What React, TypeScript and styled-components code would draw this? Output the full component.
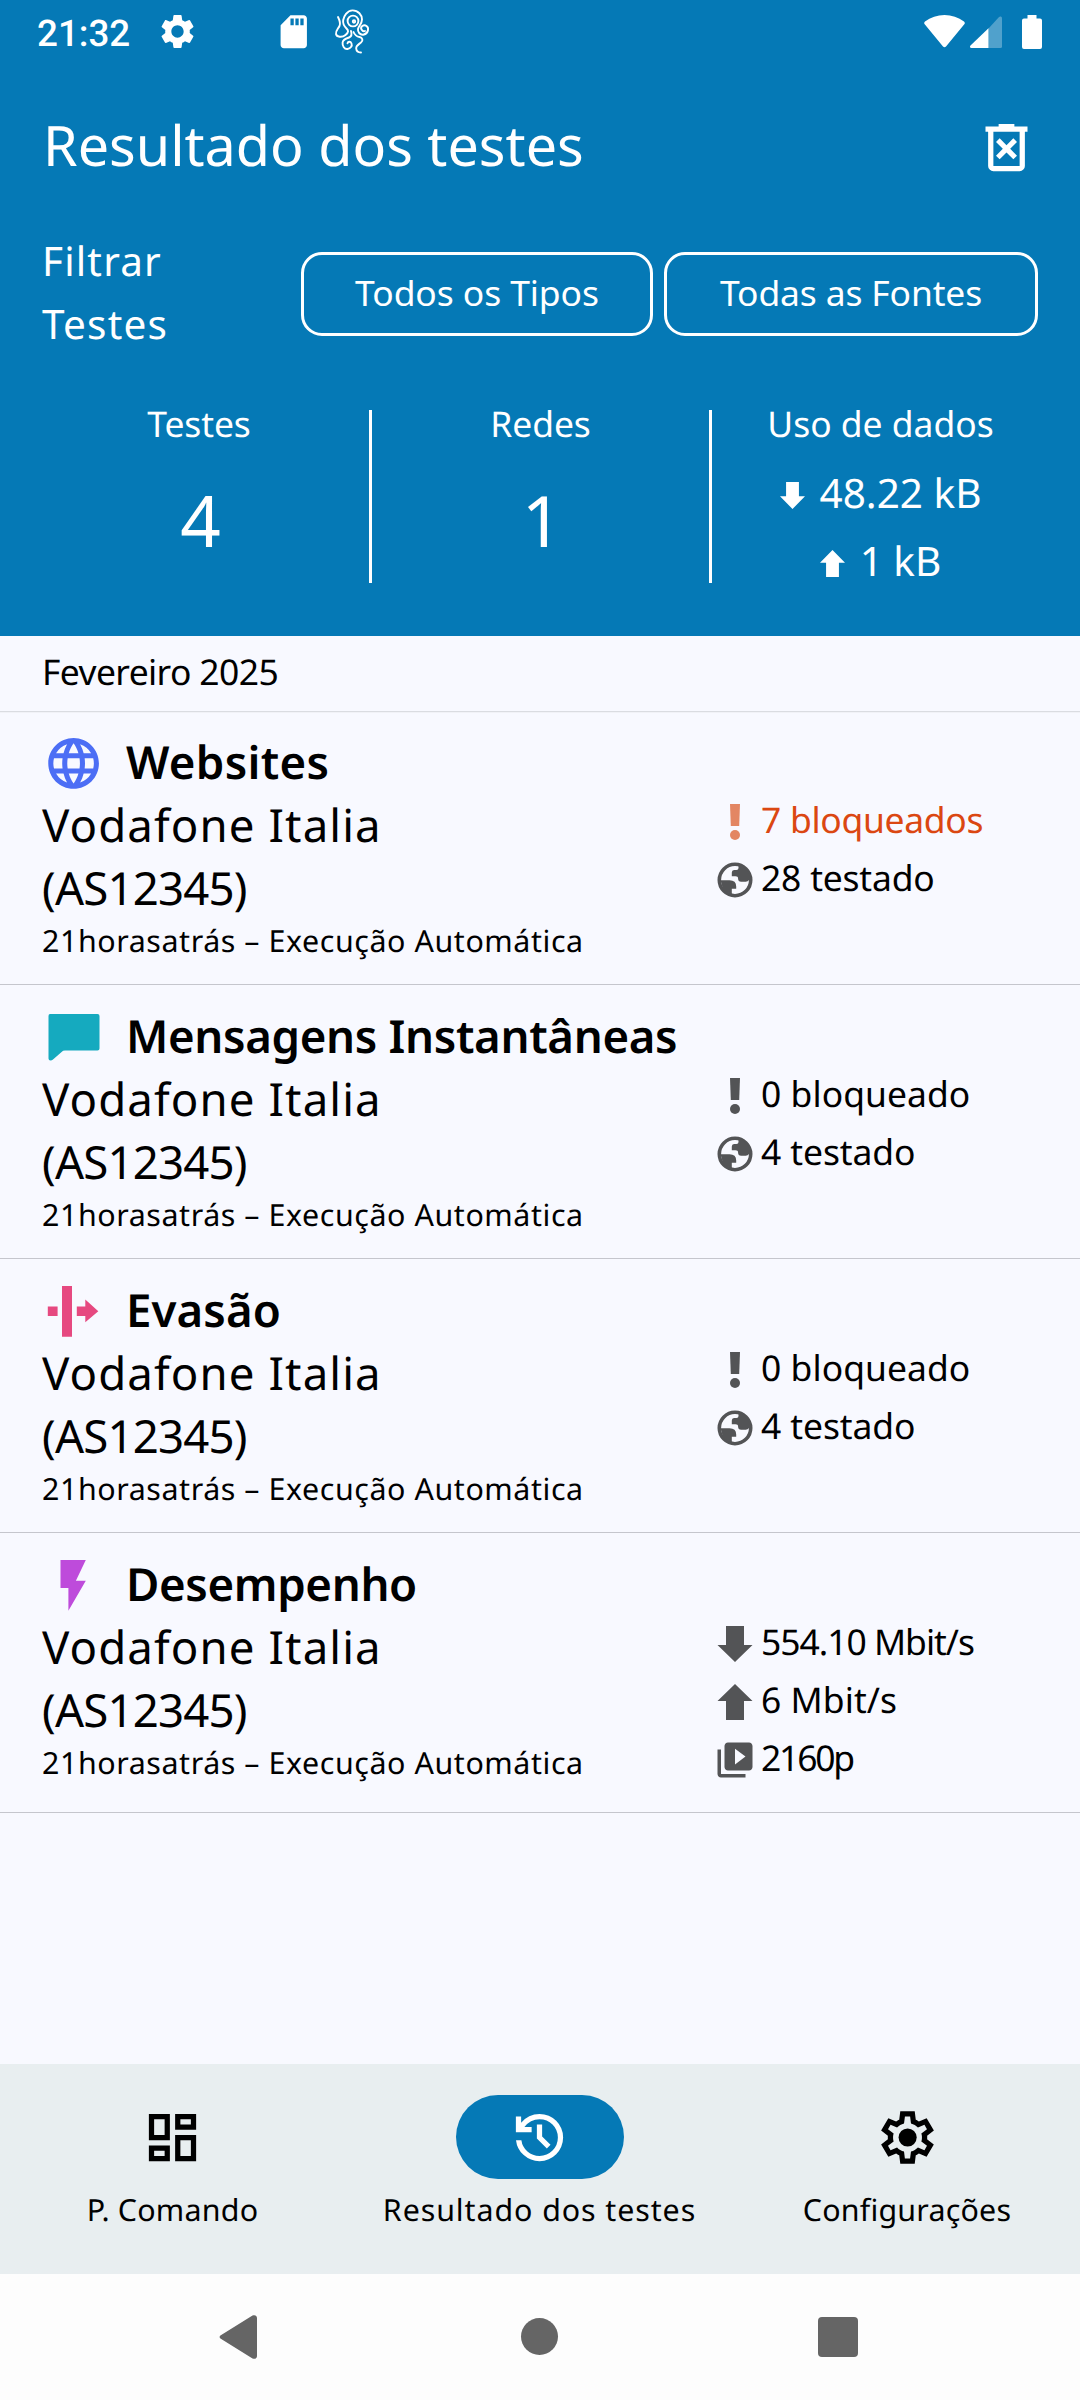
import React from "react";
import styled, { createGlobalStyle } from "styled-components";
import { MdLanguage, MdOutlineDashboard, MdSdCard, MdSettings, MdVideoLibrary } from "react-icons/md";

const BLUE = "#0579b6";
const SURFACE = "#f8f9ff";
const ICON_GREY = "#535456";

const GlobalStyle = createGlobalStyle`
  * { box-sizing: border-box; }
  body {
    margin: 0;
    font-family: "Noto Sans", "Open Sans", sans-serif;
    color: #000;
    background: ${SURFACE};
    text-rendering: geometricPrecision;
  }
  svg { display: block; flex: none; }
`;

const Screen = styled.div`
  width: 1080px;
  height: 2400px;
  display: flex;
  flex-direction: column;
  background: ${SURFACE};
  overflow: hidden;
`;

/* Every line of text in the app: size, line height and tracking vary. */
const Text = styled.span<{ $size: number; $line: number; $track?: number; $weight?: number; $lift?: number }>`
  display: block;
  font-size: ${(p) => p.$size}px;
  line-height: ${(p) => p.$line}px;
  letter-spacing: ${(p) => p.$track ?? 0}px;
  font-weight: ${(p) => p.$weight ?? 400};
  padding-bottom: ${(p) => p.$lift ?? 0}px;
  white-space: nowrap;
`;

const Header = styled.header`
  flex: none;
  height: 636px;
  background: ${BLUE};
  color: #fff;
`;

const StatusBar = styled.div`
  height: 63px;
  display: flex;
  align-items: center;
  padding: 0 38px 0 37px;
`;

const Clock = styled.span`
  width: 120px;
  padding-top: 4px;
  font: 500 36.75px/60px Roboto, sans-serif;
`;

const Notifications = styled.div`
  flex: 1;
  display: flex;
  align-items: center;
`;

const CardSlot = styled.div`
  margin: 0 20px 0 76px;
`;

const Signals = styled.div`
  display: flex;
  align-items: center;
`;

const SignalSlot = styled.div`
  margin: 0 20px 0 5px;
`;

const TitleRow = styled.div`
  height: 168px;
  display: flex;
  align-items: center;
  justify-content: space-between;
  padding: 0 42px 0 43px;
`;

const FilterRow = styled.div`
  height: 126px;
  display: flex;
  align-items: center;
  padding: 0 42px;
`;

const FilterLabel = styled.div`
  flex: 1;
  padding-bottom: 4px;
`;

const FilterButton = styled.button<{ $width: number }>`
  width: ${(p) => p.$width}px;
  height: 84px;
  padding: 0 0 4px;
  border: 3px solid #fff;
  border-radius: 21px;
  background: transparent;
  color: #fff;
  font-family: inherit;
  display: flex;
  align-items: center;
  justify-content: center;
  & + & { margin-left: 11px; }
`;

const Stats = styled.div`
  margin-top: 43px;
  padding-left: 29px;
  display: grid;
  grid-template-columns: 340px 3px 337px 3px 337px;
`;

const Stat = styled.div`
  display: flex;
  flex-direction: column;
  align-items: center;
`;

const StatNumber = styled.div`
  margin-top: 24px;
  padding-left: 3px;
`;

const Divider = styled.div`
  margin-top: 10px;
  height: 173px;
  background: #fff;
`;

const Usage = styled.div`
  margin-top: 11px;
`;

const UsageLine = styled.div`
  height: 68px;
  display: flex;
  align-items: center;
  justify-content: center;
  gap: 15px;
  svg { margin-top: 5px; }
`;

const Month = styled.div`
  flex: none;
  height: 75px;
  display: flex;
  align-items: center;
  padding: 0 42px 0;
  box-shadow: 0 1px 0 #dadce1, 0 2px 0 #f1f2f7;
`;

const List = styled.main`
  flex: 1;
`;

const ResultRow = styled.section`
  display: flex;
  padding: 20px 0 22px 42px;
  border-bottom: 1px solid #c5c6cd;
`;

const Summary = styled.div`
  width: 672px;
`;

const RowTitle = styled.div`
  height: 63px;
  display: flex;
  align-items: center;
  gap: 21px;
  svg { margin-top: 2px; }
`;

const Details = styled.div`
  padding: 62px 0 1px;
`;

const Metric = styled.div<{ $alert?: boolean }>`
  height: 58px;
  display: flex;
  align-items: center;
  gap: 5px;
  color: ${(p) => (p.$alert ? "#db4712" : "#000")};
  svg { color: ${(p) => (p.$alert ? "#e38663" : ICON_GREY)}; }
`;

const BottomNav = styled.nav`
  flex: none;
  height: 210px;
  padding-top: 31px;
  display: grid;
  grid-template-columns: 345px 347px 346px;
  gap: 21px;
  background: #e8eef0;
`;

const NavItem = styled.div`
  display: flex;
  flex-direction: column;
  align-items: center;
`;

const Pill = styled.div<{ $active?: boolean }>`
  width: 168px;
  height: 84px;
  margin-bottom: 10px;
  border-radius: 42px;
  display: flex;
  align-items: center;
  justify-content: center;
  background: ${(p) => (p.$active ? BLUE : "transparent")};
  color: ${(p) => (p.$active ? "#fff" : "#000")};
`;

const SystemNav = styled.div`
  flex: none;
  height: 126px;
  padding: 0 222px 1px 219px;
  display: flex;
  align-items: center;
  background: #fdfdfd;
  color: #656565;
`;

const HomeKey = styled.div`
  width: 37px;
  height: 37px;
  margin: 0 260px 0 264px;
  border-radius: 50%;
  background: currentColor;
`;

const RecentsKey = styled.div`
  width: 40px;
  height: 40px;
  border-radius: 4px;
  background: currentColor;
`;

const Octopus = () => (
  <svg width="36" height="45" viewBox="-1 -1 36 45" fill="none" stroke="#fff" strokeWidth="1.9" strokeLinecap="round">
    <path d="M3 7c1.500 3 3 6 1.500 9S.5 21 1 24s6 4 9.500 1 3-4.500 1-6.500S7.600 13.500 8.200 10 12 .4 17.600 .4 27 5 27 9.500 23.500 16 23 19s2 6.500 6 5.500S34.500 18 31.500 16s-6.500 1-5 3.500 3.500 1.500 3.500 1.500" />
    <circle cx="18" cy="11" r="5.400" />
    <circle cx="19" cy="11.500" r="1.200" />
    <path d="M16 21c1 3 .5 5.500-2 6.500s-6 1.500-6.400 5S9.500 39.500 12.500 39s5-3 4-5.500-3.500-2-4-.2" />
    <path d="M18.500 22c1.500 3.500 3 4.500 6 5s4 3.500 1.500 5.500-5 3-4.800 6 2.500 4 4.800 4" />
  </svg>
);

const Wifi = () => (
  <svg width="41" height="33" viewBox="0 0 41 33" fill="#fff">
    <path d="M.7 9.200C-.1 8.200 .1 7.100 1 6.400 6.600 2.300 13.300 0 20.500 0s13.900 2.300 19.500 6.400c.9.700 1.100 1.800.3 2.800L22 31.400c-.9 1.100-2.100 1.100-3 0z" />
  </svg>
);

const Cellular = () => (
  <svg width="32" height="32" viewBox="0 0 32 32" fill="#fff">
    <path opacity=".3" d="M18.500 12.500 28.800 1.200C30 0 32 .5 32 2.200V30.500a1.500 1.500 0 0 1-1.500 1.500h-12z" />
    <path d="M18.500 12.300V32H1.300C0 32-.5 30.600 .5 29.600z" />
  </svg>
);

const Battery = () => (
  <svg width="20" height="34" viewBox="0 0 20 34" fill="#fff">
    <path d="M5.500 0h9v3.500H18a2 2 0 0 1 2 2V32a2 2 0 0 1-2 2H2a2 2 0 0 1-2-2V5.500a2 2 0 0 1 2-2h3.500z" />
  </svg>
);

const Trash = () => (
  <svg width="63" height="63" viewBox="0 0 24 24" fill="currentColor">
    <path d="M7 21q-.825 0-1.412-.587T5 19V6H4V4h5V3h6v1h5v2h-1v13q0 .825-.587 1.413T17 21zM17 6H7v13h10z" />
    <path d="m9.400 16.500 2.600-2.600 2.600 2.600 1.400-1.400-2.600-2.600L16 9.900 14.600 8.500 12 11.100 9.400 8.500 8 9.900l2.600 2.600L8 15.100z" />
  </svg>
);

const Arrow = ({ up, small }: { up?: boolean; small?: boolean }) => (
  <svg width={small ? 25 : 42} height={small ? 27 : 42} viewBox={small ? "0 0 35 36" : "-3.500 -3 42 42"} fill="currentColor" preserveAspectRatio="none">
    <path d={up ? "M8.500 36h18V17H35L17.500 0 0 17h8.500z" : "M8.500 0h18v19H35L17.500 36 0 19h8.500z"} />
  </svg>
);

const Exclamation = () => (
  <svg width="42" height="42" viewBox="0 0 42 42" fill="currentColor">
    <path d="M16 3h10l-.8 22h-8.400z" />
    <circle cx="21" cy="34" r="5" />
  </svg>
);

const Earth = () => (
  <svg width="42" height="42" viewBox="-3.500 -3.500 42 42">
    <circle cx="17.500" cy="17.500" r="15.700" fill="none" stroke="currentColor" strokeWidth="3.600" />
    <path
      fill="currentColor"
      d="M21 3v2.500Q21 7.500 19 7.500h-2.500Q14.300 7.500 14.300 10v3.800H18q2.600 0 2.600 2.400 0 3 3 3h4.600q2.200 0 3.300-1.700L31.500 12 26 4zM3 17.700h9q6.700 0 6.700 6.200v2.300h-4.400V32L6 28z"
    />
  </svg>
);

const Video = () => <MdVideoLibrary size={42} />;

const WebsitesIcon = () => (
  <svg width="63" height="63" viewBox="0 0 63 63" color="#4c6ef5">
    <MdLanguage x={1.2} y={1} size={60.8} />
  </svg>
);

const MessagingIcon = () => (
  <svg width="63" height="63" viewBox="0 0 63 63" fill="#15aabf">
    <path d="M8 8h47.500q2 0 2 2v32.500q0 2-2 2H23q-2 0-3.400 1.400L11 53.400q-1 1-2.500 1-2 0-2-2V10Q6.500 8 8 8z" />
  </svg>
);

const CircumventionIcon = () => (
  <svg width="63" height="63" viewBox="0 0 63 63" fill="#e64980">
    <path d="M5.800 26.400h9.800V36H5.800zM20 6h10v50.800H20zM34.800 26.400h8.500v-6.800l13 11.600-13 11V36h-8.500z" />
  </svg>
);

const PerformanceIcon = () => (
  <svg width="63" height="63" viewBox="0 0 63 63" fill="#be4bdb">
    <path d="M18.500 6h25.300l-9.900 20.700h9.900L26.400 56.700V34h-7.900z" />
  </svg>
);

const History = () => (
  <svg width="63" height="63" viewBox="0 0 24 24" fill="currentColor">
    <path d="M12 21q-3.450 0-6.012-2.287T3.050 13H5.100q.35 2.600 2.313 4.300T12 19q2.925 0 4.963-2.037T19 12t-2.037-4.962T12 5q-1.725 0-3.225.8T6.250 8H9v2H3V4h2v2.350q1.275-1.600 3.113-2.475T12 3q1.875 0 3.513.713t2.850 1.924 1.925 2.850T21 12t-.712 3.513-1.925 2.850-2.850 1.925T12 21m2.800-4.800L11 12.400V7h2v4.600l3.200 3.200z" />
  </svg>
);

const Gear = () => (
  <svg width="63" height="63" viewBox="0 0 24 24" fill="currentColor">
    <path d="m9.250 22-.4-3.200q-.325-.125-.612-.3t-.563-.375L4.700 19.375l-2.750-4.750 2.575-1.950Q4.500 12.500 4.500 12.338v-.675q0-.163.025-.338L1.950 9.375l2.750-4.750 2.975 1.250q.275-.2.575-.375t.6-.3l.4-3.200h5.500l.4 3.200q.325.125.613.3t.562.375l2.975-1.250 2.750 4.750-2.575 1.950q.025.175.025.338v.674q0 .163-.05.338l2.575 1.950-2.750 4.750-2.950-1.250q-.275.2-.575.375t-.6.3l-.4 3.200zM11 20h1.975l.35-2.650q.775-.2 1.438-.587t1.212-.938l2.475 1.025.975-1.700-2.150-1.625q.125-.35.175-.737T17.500 12t-.05-.787-.175-.738l2.150-1.625-.975-1.700-2.475 1.050q-.55-.575-1.212-.962t-1.438-.588L13 4h-1.975l-.35 2.650q-.775.2-1.437.588t-1.213.937L5.550 7.150l-.975 1.700 2.150 1.600q-.125.375-.175.75t-.05.8q0 .4.050.775t.175.75l-2.150 1.625.975 1.700 2.475-1.050q.55.575 1.213.963t1.437.587z" />
    <circle cx="12.050" cy="12" r="3.450" />
  </svg>
);

const BackKey = () => (
  <svg width="38" height="44" viewBox="0 0 38 44" fill="currentColor">
    <path d="M1.800 20.200 33.500 .6C35.800-.6 38 .6 38 3v38c0 2.400-2.200 3.600-4.500 2.400L1.800 23.800c-1.600-1-1.600-2.600 0-3.600z" />
  </svg>
);

type MetricData = { icon: React.ReactNode; text: string; track: number; alert?: boolean };
type ResultData = { icon: React.ReactNode; title: string; track: number; metrics: MetricData[] };

const fewTested: MetricData[] = [
  { icon: <Exclamation />, text: "0 bloqueado", track: 0.05 },
  { icon: <Earth />, text: "4 testado", track: -0.1 },
];

const results: ResultData[] = [
  {
    icon: <WebsitesIcon />,
    title: "Websites",
    track: 0.3,
    metrics: [
      { icon: <Exclamation />, text: "7 bloqueados", track: -0.3, alert: true },
      { icon: <Earth />, text: "28 testado", track: -0.2 },
    ],
  },
  { icon: <MessagingIcon />, title: "Mensagens Instantâneas", track: -0.34, metrics: fewTested },
  { icon: <CircumventionIcon />, title: "Evasão", track: 0.1, metrics: fewTested },
  {
    icon: <PerformanceIcon />,
    title: "Desempenho",
    track: -0.36,
    metrics: [
      { icon: <Arrow />, text: "554.10 Mbit/s", track: -1.02 },
      { icon: <Arrow up />, text: "6 Mbit/s", track: 0.06 },
      { icon: <Video />, text: "2160p", track: -2.2 },
    ],
  },
];

const navItems = [
  { icon: <MdOutlineDashboard size={63} />, label: "P. Comando", track: 0.21 },
  { icon: <History />, label: "Resultado dos testes", track: 0.91, active: true },
  { icon: <Gear />, label: "Configurações", track: 0.2 },
];

const Result = ({ icon, title, track, metrics }: ResultData) => (
  <ResultRow>
    <Summary>
      <RowTitle>
        {icon}
        <Text $size={45.6} $line={63} $weight={600} $track={track}>{title}</Text>
      </RowTitle>
      <Text $size={45.6} $line={63} $track={1.1}>Vodafone Italia</Text>
      <Text $size={45.6} $line={63} $track={-0.8}>(AS12345)</Text>
      <Text $size={30.4} $line={42} $track={0.57}>21horasatrás – Execução Automática</Text>
    </Summary>
    <Details>
      {metrics.map((m) => (
        <Metric key={m.text} $alert={m.alert}>
          {m.icon}
          <Text $size={35.46} $line={50} $track={m.track} $lift={4}>{m.text}</Text>
        </Metric>
      ))}
    </Details>
  </ResultRow>
);

export default function App() {
  return (
    <Screen>
      <GlobalStyle />
      <Header>
        <StatusBar>
          <Clock>21:32</Clock>
          <Notifications>
            <MdSettings size={41} />
            <CardSlot><MdSdCard size={39.5} /></CardSlot>
            <Octopus />
          </Notifications>
          <Signals>
            <Wifi />
            <SignalSlot><Cellular /></SignalSlot>
            <Battery />
          </Signals>
        </StatusBar>
        <TitleRow>
          <Text $size={55.7} $line={76} $lift={4}>Resultado dos testes</Text>
          <Trash />
        </TitleRow>
        <FilterRow>
          <FilterLabel>
            <Text $size={40.5} $line={63} $track={1.15}>Filtrar</Text>
            <Text $size={40.5} $line={63} $track={1.24}>Testes</Text>
          </FilterLabel>
          <FilterButton $width={352}>
            <Text $size={35.46} $line={50} $track={-0.08}>Todos os Tipos</Text>
          </FilterButton>
          <FilterButton $width={374}>
            <Text $size={35.46} $line={50} $track={-0.15}>Todas as Fontes</Text>
          </FilterButton>
        </FilterRow>
        <Stats>
          <Stat>
            <Text $size={35.46} $line={48} $track={-0.12}>Testes</Text>
            <StatNumber><Text $size={70.9} $line={96}>4</Text></StatNumber>
          </Stat>
          <Divider />
          <Stat>
            <Text $size={35.46} $line={48} $track={-0.11}>Redes</Text>
            <StatNumber><Text $size={70.9} $line={96}>1</Text></StatNumber>
          </Stat>
          <Divider />
          <Stat>
            <Text $size={35.46} $line={48}>Uso de dados</Text>
            <Usage>
              <UsageLine>
                <Arrow small />
                <Text $size={40.5} $line={62}>48.22 kB</Text>
              </UsageLine>
              <UsageLine>
                <Arrow small up />
                <Text $size={40.5} $line={62}>1 kB</Text>
              </UsageLine>
            </Usage>
          </Stat>
        </Stats>
      </Header>
      <Month>
        <Text $size={35.46} $line={50} $track={-0.6} $lift={4}>Fevereiro 2025</Text>
      </Month>
      <List>
        {results.map((r) => (
          <Result key={r.title} {...r} />
        ))}
      </List>
      <BottomNav>
        {navItems.map((n) => (
          <NavItem key={n.label}>
            <Pill $active={n.active}>{n.icon}</Pill>
            <Text $size={30.4} $line={42} $track={n.track}>{n.label}</Text>
          </NavItem>
        ))}
      </BottomNav>
      <SystemNav>
        <BackKey />
        <HomeKey />
        <RecentsKey />
      </SystemNav>
    </Screen>
  );
}
